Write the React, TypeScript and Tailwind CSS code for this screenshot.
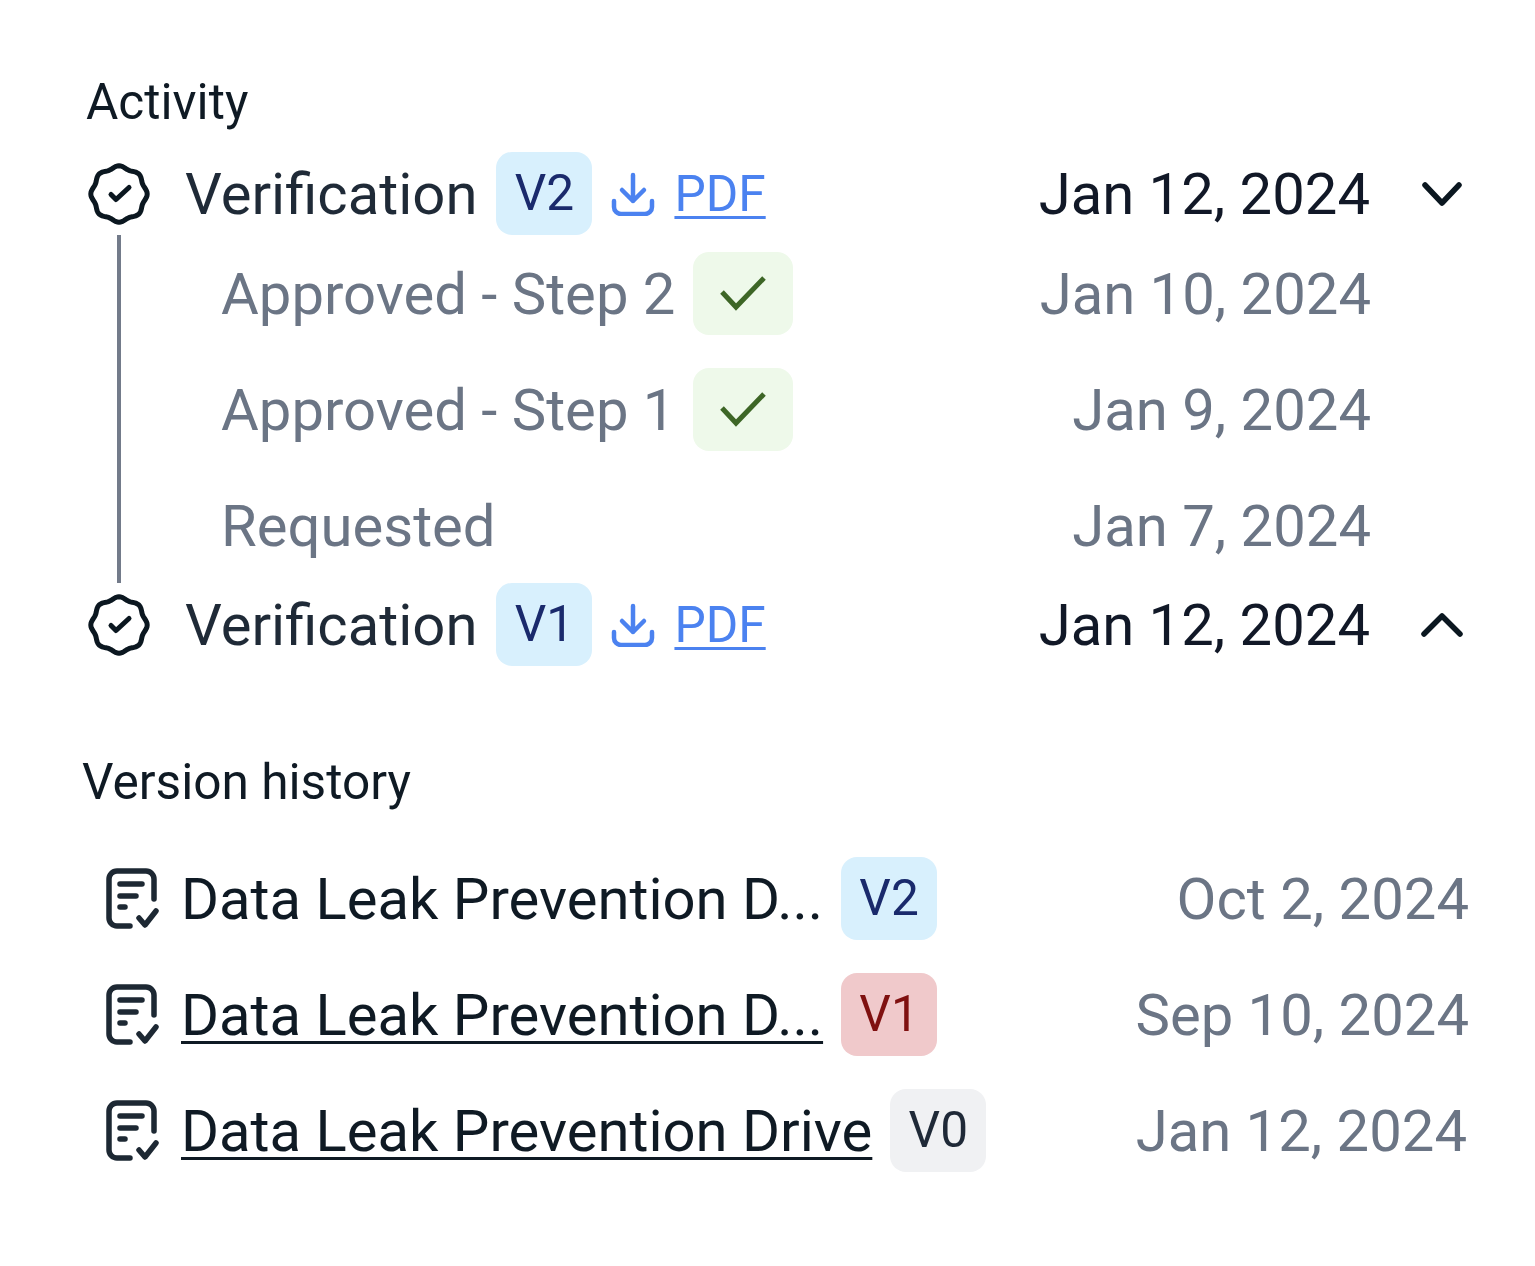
import React from "react";

const font = { fontFamily: "Roboto, sans-serif" };

function sealPath() {
  const pts: string[] = [];
  for (let i = 0; i < 96; i++) {
    const t = (i / 96) * Math.PI * 2;
    const r = 26.9 + 1.3 * Math.cos(8 * t);
    pts.push(`${(32 + r * Math.sin(t)).toFixed(2)} ${(32 - r * Math.cos(t)).toFixed(2)}`);
  }
  return "M" + pts.join("L") + "Z";
}

const SEAL = sealPath();

function SealIcon() {
  return (
    <svg width="64" height="64" viewBox="0 0 64 64" fill="none" stroke="#0b1720" strokeWidth="5" strokeLinecap="round" strokeLinejoin="round">
      <path d={SEAL} />
      <path d="M24 32.5l5 5 13-12" />
    </svg>
  );
}

function DownloadIcon() {
  return (
    <svg width="44" height="44" viewBox="0 0 44 44" fill="none" stroke="#4b82f0" strokeWidth="4.5" strokeLinecap="round" strokeLinejoin="round">
      <path d="M22 3v26M11 18l11 11 11-11" />
      <path d="M3 29v6a7 7 0 0 0 7 7h24a7 7 0 0 0 7-7v-6" />
    </svg>
  );
}

function DocIcon() {
  return (
    <svg width="60" height="64" viewBox="0 0 60 64" fill="none" stroke="#1d2833" strokeWidth="5.5" strokeLinecap="round" strokeLinejoin="round">
      <path d="M49 32V12a8 8 0 0 0-8-8H12a8 8 0 0 0-8 8v39a8 8 0 0 0 8 8h13" />
      <path d="M15 17h22M15 29h16M15 40h5" />
      <path d="M34 51l6 7 11-14" />
    </svg>
  );
}

function Badge({ label, className }: { label: string; className: string }) {
  return (
    <span className={`flex h-[83px] w-[96px] items-center justify-center rounded-2xl text-[49.6px] ${className}`}>
      {label}
    </span>
  );
}

function VerificationRow({ version, up }: { version: string; up?: boolean }) {
  return (
    <div className="flex h-[83px] items-center">
      <div className="flex w-[98px] shrink-0">
        <SealIcon />
      </div>
      <span className="text-[58px] leading-none text-[#1f2a37]">Verification</span>
      <Badge label={version} className="ml-[19px] bg-[#d8f0fd] text-[#1a2a6c]" />
      <span className="ml-[19px] flex items-center">
        <DownloadIcon />
      </span>
      <a href="#" className="mt-[2px] ml-[19px] text-[49.6px] leading-none text-[#4b82f0] underline decoration-[3px] underline-offset-[5px]">
        PDF
      </a>
      <span className="ml-auto text-[58px] leading-none text-[#111827]">Jan 12, 2024</span>
      <svg className="ml-[50px]" width="44" height="28" viewBox="0 0 44 28" fill="none" stroke="#0b1720" strokeWidth="5.5" strokeLinecap="round" strokeLinejoin="round">
        <path d={up ? "M4 23L22 5l18 18" : "M5 5l17 18L39 5"} />
      </svg>
    </div>
  );
}

function StepRow({ label, date, approved }: { label: string; date: string; approved?: boolean }) {
  return (
    <div className="flex h-[116px] items-center pl-[134px] pr-[93px]">
      <span className="mt-[2px] w-[472px] shrink-0 text-[58px] leading-none text-[#6b7585]">{label}</span>
      {approved && (
        <span className="flex h-[83px] w-[100px] items-center justify-center rounded-2xl bg-[#eef9ea]">
          <svg width="46" height="36" viewBox="0 0 46 36" fill="none" stroke="#3d6626" strokeWidth="5">
            <path d="M2 17l14 15L44 3" />
          </svg>
        </span>
      )}
      <span className="mt-[2px] ml-auto text-[58px] leading-none text-[#6b7585]">{date}</span>
    </div>
  );
}

function VersionRow({
  title,
  date,
  version,
  badge,
  underline,
  dateClass = "",
}: {
  title: string;
  date: string;
  version: string;
  badge: string;
  underline?: boolean;
  dateClass?: string;
}) {
  return (
    <div className="flex h-[116px] items-center">
      <div className="-ml-[1px] w-[76px] shrink-0">
        <DocIcon />
      </div>
      <span className={`text-[58px] leading-none text-[#0f1a24] ${underline ? "underline decoration-[3px] underline-offset-[6px]" : ""}`}>
        {title}
      </span>
      <Badge label={version} className={`-mt-[1px] ml-[18px] ${badge}`} />
      <span className={`ml-auto text-[58px] leading-none text-[#6b7585] ${dateClass}`}>{date}</span>
    </div>
  );
}

export default function App() {
  return (
    <div className="min-h-[1266px] w-[1535px] bg-white pt-[74px]" style={font}>
      <section className="pl-[87px] pr-[71px]">
        <h2 className="-ml-[1px] mb-[22px] text-[49.6px] leading-[56px] font-normal text-[#0f1a24]">Activity</h2>
        <VerificationRow version="V2" />
        <div className="relative">
          <div className="absolute top-0 bottom-0 left-[30px] w-[4px] bg-[#737b8a]" />
          <StepRow label="Approved - Step 2" date="Jan 10, 2024" approved />
          <StepRow label="Approved - Step 1" date="Jan 9, 2024" approved />
          <StepRow label="Requested" date="Jan 7, 2024" />
        </div>
        <VerificationRow version="V1" up />
      </section>
      <section className="mt-[88px] pl-[83px] pr-[66px]">
        <h2 className="-ml-[1px] mb-[31px] text-[49.6px] leading-[56px] font-normal text-[#0f1a24]">Version history</h2>
        <div className="pl-[23px]">
          <VersionRow title="Data Leak Prevention D..." date="Oct 2, 2024" version="V2" badge="bg-[#d8f0fd] text-[#1a2a6c]" />
          <VersionRow title="Data Leak Prevention D..." date="Sep 10, 2024" version="V1" badge="bg-[#f0c9cb] text-[#7f1010]" underline />
          <VersionRow title="Data Leak Prevention Drive" date="Jan 12, 2024" version="V0" badge="bg-[#f0f1f3] text-[#1f2937]" underline dateClass="mr-[2px]" />
        </div>
      </section>
    </div>
  );
}
